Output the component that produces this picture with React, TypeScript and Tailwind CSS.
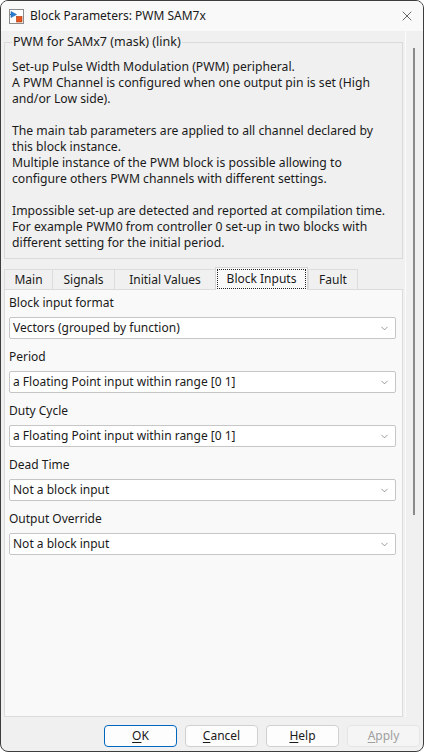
import { ChevronDown, X } from 'lucide-react'

const FONT = "font-['Noto_Sans','Open_Sans',sans-serif]"

const DESCRIPTION = [
  'Set-up Pulse Width Modulation (PWM) peripheral.',
  'A PWM Channel is configured when one output pin is set (High',
  'and/or Low side).',
  '',
  'The main tab parameters are applied to all channel declared by',
  'this block instance.',
  'Multiple instance of the PWM block is possible allowing to',
  'configure others PWM channels with different settings.',
  '',
  'Impossible set-up are detected and reported at compilation time.',
  'For example PWM0 from controller 0 set-up in two blocks with',
  'different setting for the initial period.',
]

const TABS = [
  { label: 'Main', w: 'w-[49px]' },
  { label: 'Signals', w: 'w-[63px]' },
  { label: 'Initial Values', w: 'w-[102px]' },
  { label: 'Block Inputs', w: 'w-[93px]', active: true },
  { label: 'Fault', w: 'w-[50px]' },
]

const FIELDS = [
  { label: 'Block input format', value: 'Vectors (grouped by function)' },
  { label: 'Period', value: 'a Floating Point input within range [0 1]' },
  { label: 'Duty Cycle', value: 'a Floating Point input within range [0 1]' },
  { label: 'Dead Time', value: 'Not a block input' },
  { label: 'Output Override', value: 'Not a block input' },
]

function BlockIcon() {
  return (
    <svg width="15" height="15" viewBox="0 0 15 15">
      <rect x="0.5" y="0.5" width="14" height="14" fill="#fff" stroke="#8c8c8c" />
      <path d="M2 2.5 L7.5 5.5 L2 8.5 Z" fill="#2a7fd4" stroke="#1b5fa8" strokeWidth="0.6" />
      <line x1="1" y1="5.5" x2="2" y2="5.5" stroke="#1b5fa8" />
      <rect x="7.5" y="7.5" width="5.5" height="5.5" fill="#e8551e" stroke="#a83a10" strokeWidth="0.6" />
    </svg>
  )
}

function Combo({ value }: { value: string }) {
  return (
    <div className="h-[22px] bg-white border border-[#c6c6c6] rounded-[2px] flex items-center pl-[3px] pr-[5px]">
      <span className="flex-1 text-[12px] text-[#1a1a1a] whitespace-nowrap">{value}</span>
      <ChevronDown size={11} strokeWidth={1.3} className="text-[#555]" />
    </div>
  )
}

function DialogButton({ accel, rest, primary, disabled }: { accel: string; rest: string; primary?: boolean; disabled?: boolean }) {
  const tone = disabled
    ? 'bg-[#f5f5f5] border-[#e5e5e5] text-[#a0a0a0]'
    : primary
      ? 'bg-[#fdfdfd] border-[#0067c0] text-[#1a1a1a]'
      : 'bg-[#fdfdfd] border-[#d0d0d0] text-[#1a1a1a]'
  return (
    <div className={`w-[73px] h-[22px] rounded-[4px] border flex items-center justify-center text-[12px] ${tone}`}>
      <span>
        <span className="underline underline-offset-2">{accel}</span>
        {rest}
      </span>
    </div>
  )
}

export default function App() {
  return (
    <div className={`w-[424px] h-[752px] bg-white ${FONT}`}>
      <div className="w-full h-full flex flex-col rounded-[8px] border border-[#3d3d3d] overflow-hidden bg-[#f0f0f0]">
        {/* title bar */}
        <div className="h-[30px] shrink-0 bg-[#f9f9f9] flex items-center pl-[8px] pr-[8px]">
          <BlockIcon />
          <span className="ml-[6px] text-[12px] text-[#1a1a1a]">Block Parameters: PWM SAM7x</span>
          <div className="flex-1" />
          <X size={16} strokeWidth={1} className="text-[#1a1a1a]" />
        </div>

        {/* body + scroll column */}
        <div className="flex-1 flex min-h-0">
          <div className="w-[404px] shrink-0 pl-[3px] pr-[2px] flex flex-col">
            <fieldset className="mt-[3px] border border-[#dadada] px-[7px] pb-[7px]">
              <legend className="px-[1px] text-[12.5px] text-[#1a1a1a] leading-[16px]">
                PWM for SAMx7 (mask) (link)
              </legend>
              <div className="pt-[9px] text-[12.2px] leading-[16px] text-[#1a1a1a] whitespace-nowrap">
                {DESCRIPTION.map((line, i) => (
                  <div key={i} className="h-[16px]">{line}</div>
                ))}
              </div>
            </fieldset>

            {/* tabs */}
            <div className="mt-[8px] flex items-end h-[22px] text-[12px] text-[#1a1a1a]">
              {TABS.map((t) =>
                t.active ? (
                  <div
                    key={t.label}
                    className={`${t.w} h-[23px] -mb-px relative z-10 bg-[#f9f9f9] border border-b-0 border-[#d6d6d6] p-[1px] flex`}
                  >
                    <div className="flex-1 border border-dotted border-[#222] flex items-center justify-center">
                      {t.label}
                    </div>
                  </div>
                ) : (
                  <div
                    key={t.label}
                    className={`${t.w} h-[20px] bg-[#f0f0f0] border border-b-0 border-[#dcdcdc] -mr-px flex items-center justify-center`}
                  >
                    {t.label}
                  </div>
                ),
              )}
            </div>

            <div className="flex-1 bg-[#f9f9f9] border border-[#dcdcdc] pt-[5px] pl-[4px] pr-[6px] flex flex-col gap-[10px]">
              {FIELDS.map((f) => (
                <div key={f.label} className="flex flex-col gap-[6px]">
                  <div className="h-[16px] leading-[16px] text-[12px] text-[#1a1a1a]">{f.label}</div>
                  <Combo value={f.value} />
                </div>
              ))}
            </div>
          </div>

          {/* scroll column */}
          <div className="w-[1px] bg-[#fbfbfb]" />
          <div className="flex-1 pl-[7px] pt-[17px]">
            <div className="w-[2px] h-[467px] bg-[#8a8a8a]" />
          </div>
        </div>

        {/* footer buttons */}
        <div className="h-[34px] shrink-0 flex items-start justify-end gap-[8px] pt-[8px] pr-[3px]">
          <DialogButton accel="O" rest="K" primary />
          <DialogButton accel="C" rest="ancel" />
          <DialogButton accel="H" rest="elp" />
          <DialogButton accel="A" rest="pply" disabled />
        </div>
      </div>
    </div>
  )
}
